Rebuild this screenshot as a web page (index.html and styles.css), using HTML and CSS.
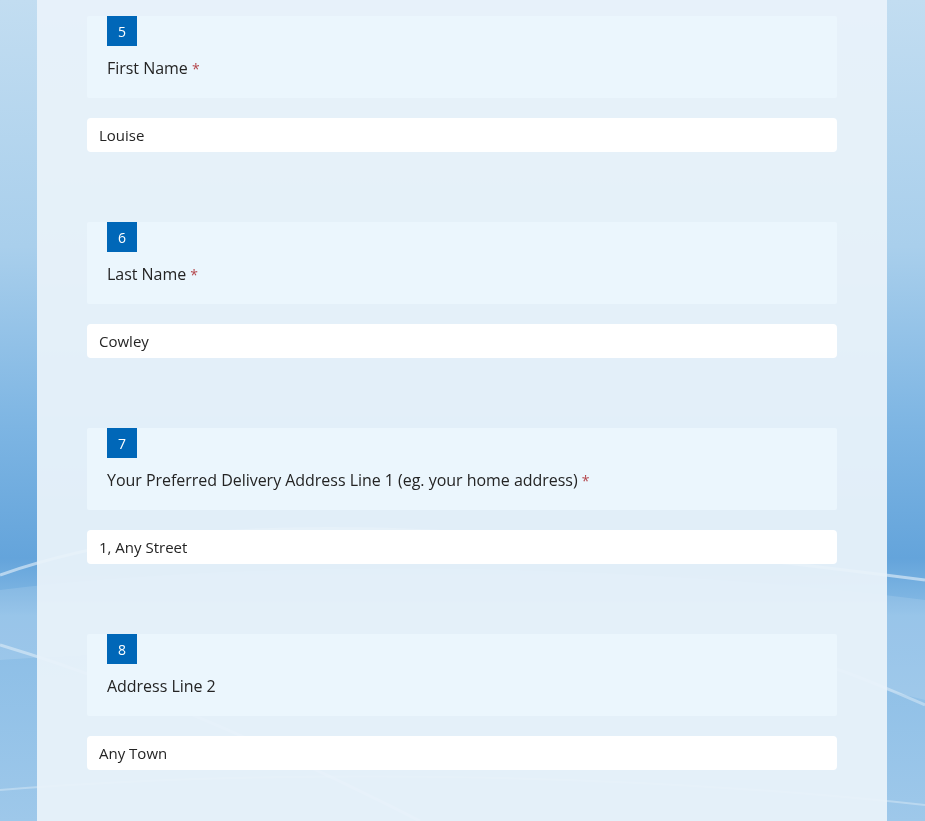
FILE: index.html
```html
<!DOCTYPE html>
<html lang="en">
<head>
<meta charset="utf-8">
<title>Form</title>
<link rel="stylesheet" href="styles.css">
</head>
<body>
<svg class="swirl" viewBox="0 0 925 821" preserveAspectRatio="none" aria-hidden="true">
  <path d="M0 575 C 200 505, 450 520, 925 580" fill="none" stroke="#ffffff" stroke-opacity="0.5" stroke-width="3"/>
  <path d="M0 645 C 150 690, 300 760, 420 821" fill="none" stroke="#ffffff" stroke-opacity="0.4" stroke-width="3"/>
  <path d="M925 705 C 800 650, 760 640, 600 640" fill="none" stroke="#ffffff" stroke-opacity="0.35" stroke-width="3"/>
  <path d="M0 790 C 250 770, 600 770, 925 805" fill="none" stroke="#ffffff" stroke-opacity="0.3" stroke-width="2"/>
  <path d="M0 590 C 250 560, 600 560, 925 600 L 925 700 C 700 640, 300 640, 0 660 Z" fill="#ffffff" fill-opacity="0.12"/>
</svg>
<main class="panel">
  <section class="question">
    <div class="q-head">
      <span class="badge">5</span>
      <div class="q-label">First Name <span class="req">*</span></div>
    </div>
    <div class="q-input">Louise</div>
  </section>
  <section class="question">
    <div class="q-head">
      <span class="badge">6</span>
      <div class="q-label">Last Name <span class="req">*</span></div>
    </div>
    <div class="q-input">Cowley</div>
  </section>
  <section class="question">
    <div class="q-head">
      <span class="badge">7</span>
      <div class="q-label">Your Preferred Delivery Address Line 1 (eg. your home address) <span class="req">*</span></div>
    </div>
    <div class="q-input">1, Any Street</div>
  </section>
  <section class="question">
    <div class="q-head">
      <span class="badge">8</span>
      <div class="q-label">Address Line 2</div>
    </div>
    <div class="q-input">Any Town</div>
  </section>
</main>
</body>
</html>
```
FILE: styles.css
```css
html, body {
  margin: 0;
  height: 100%;
}
body {
  font-family: "Open Sans", "Noto Sans", sans-serif;
  color: #242424;
  background: linear-gradient(180deg, #c2ddf1 0%, #a9cfec 30%, #7db5e3 52%, #64a4db 68%, #8abde6 75%, #9ec8ea 100%);
  overflow: hidden;
  position: relative;
}
.swirl {
  position: fixed;
  left: 0;
  top: 0;
  width: 925px;
  height: 821px;
  z-index: 0;
}
.panel {
  position: relative;
  z-index: 1;
  width: 850px;
  margin: 0 0 0 37px;
  min-height: 821px;
  box-sizing: border-box;
  padding: 16px 50px 0;
  background: rgba(233, 242, 250, 0.94);
  display: flex;
  flex-direction: column;
  gap: 70px;
}
.question {
  display: flex;
  flex-direction: column;
  gap: 20px;
}
.q-head {
  background: #ebf6fd;
  padding: 0 20px 18px;
  height: 82px;
  box-sizing: border-box;
  border-radius: 2px;
}
.badge {
  display: flex;
  align-items: center;
  justify-content: center;
  width: 30px;
  height: 30px;
  background: #0067b8;
  color: #ffffff;
  font-size: 14px;
  margin-bottom: 10px;
}
.q-label {
  font-size: 16px;
  line-height: 24px;
  letter-spacing: -0.03px;
}
.req {
  color: #b4474c;
  font-size: 14px;
}
.q-input {
  background: #ffffff;
  height: 34px;
  box-sizing: border-box;
  border-radius: 4px;
  padding: 0 12px;
  display: flex;
  align-items: center;
  font-size: 15px;
  color: #242424;
}
```
